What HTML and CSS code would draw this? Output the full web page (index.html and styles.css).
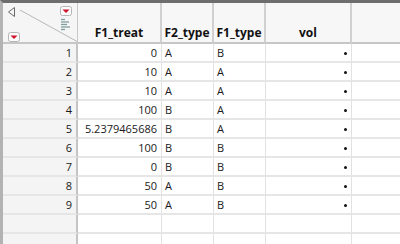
FILE: index.html
```html
<!DOCTYPE html>
<html>
<head>
<meta charset="utf-8">
<link rel="stylesheet" href="styles.css">
</head>
<body>
<div class="frame">
<table class="grid">
<colgroup>
<col class="c0"><col class="c1"><col class="c2"><col class="c3"><col class="c4"><col class="c5">
</colgroup>
<thead>
<tr>
<th class="corner">
<svg class="corner-svg" width="75" height="39" viewBox="0 0 75 39">
<path d="M11.5 4.5 L5.5 9 L11.5 13.5 Z" fill="none" stroke="#6a6a6a" stroke-width="1"/>
<line x1="17" y1="7" x2="75" y2="39" stroke="#b8b8b8" stroke-width="1"/>
<rect x="57.5" y="3.5" width="11" height="9" rx="2" fill="#fbfbfb" stroke="#b5b5b5"/>
<path d="M59.5 6.5 L66.5 6.5 L63 10 Z" fill="#d0112b"/>
<rect x="5.5" y="29.5" width="11" height="9" rx="2" fill="#fbfbfb" stroke="#b5b5b5"/>
<path d="M7.5 32.5 L14.5 32.5 L11 36 Z" fill="#d0112b"/>
<g stroke="#7f9e9c" stroke-width="1.3">
<line x1="58" y1="16.5" x2="62" y2="16.5"/>
<line x1="58" y1="19" x2="66" y2="19"/>
<line x1="58" y1="21.5" x2="64" y2="21.5"/>
<line x1="58" y1="24" x2="67" y2="24"/>
<line x1="58" y1="26.5" x2="62" y2="26.5"/>
</g>
</svg>
</th>
<th class="hd">F1_treat</th>
<th class="hd">F2_type</th>
<th class="hd">F1_type</th>
<th class="hd">vol</th>
<th class="hd last"></th>
</tr>
</thead>
<tbody>
<tr><td class="rn">1</td><td class="num">0</td><td class="chr">A</td><td class="chr">B</td><td class="num"><span class="miss"></span></td><td></td></tr>
<tr><td class="rn">2</td><td class="num">10</td><td class="chr">A</td><td class="chr">A</td><td class="num"><span class="miss"></span></td><td></td></tr>
<tr><td class="rn">3</td><td class="num">10</td><td class="chr">A</td><td class="chr">A</td><td class="num"><span class="miss"></span></td><td></td></tr>
<tr><td class="rn">4</td><td class="num">100</td><td class="chr">B</td><td class="chr">A</td><td class="num"><span class="miss"></span></td><td></td></tr>
<tr><td class="rn">5</td><td class="num">5.2379465686</td><td class="chr">B</td><td class="chr">A</td><td class="num"><span class="miss"></span></td><td></td></tr>
<tr><td class="rn">6</td><td class="num">100</td><td class="chr">B</td><td class="chr">B</td><td class="num"><span class="miss"></span></td><td></td></tr>
<tr><td class="rn">7</td><td class="num">0</td><td class="chr">B</td><td class="chr">B</td><td class="num"><span class="miss"></span></td><td></td></tr>
<tr><td class="rn">8</td><td class="num">50</td><td class="chr">A</td><td class="chr">B</td><td class="num"><span class="miss"></span></td><td></td></tr>
<tr><td class="rn">9</td><td class="num">50</td><td class="chr">A</td><td class="chr">B</td><td class="num"><span class="miss"></span></td><td></td></tr>
<tr><td class="rn"></td><td></td><td></td><td></td><td></td><td></td></tr>
<tr><td class="rn"></td><td></td><td></td><td></td><td></td><td></td></tr>
</tbody>
</table>
</div>
</body>
</html>
```
FILE: styles.css
```css
html, body {
  margin: 0;
  padding: 0;
  background: #ffffff;
  overflow: hidden;
}
.frame {
  width: 400px;
  height: 244px;
  box-sizing: border-box;
  border-top: 3px solid #6e6e6e;
  border-left: 3px solid #b3b3b3;
  overflow: hidden;
  background: #ffffff;
}
.grid {
  border-collapse: separate;
  border-spacing: 0;
  table-layout: fixed;
  width: 500px;
  font-family: "Open Sans", "Noto Sans", sans-serif;
  font-size: 11px;
  color: #1a1a1a;
}
.c0 { width: 75px; }
.c1 { width: 84px; }
.c2 { width: 52px; }
.c3 { width: 52px; }
.c4 { width: 86px; }
.c5 { width: 151px; }
th, td {
  box-sizing: border-box;
  padding: 0;
  white-space: nowrap;
  overflow: hidden;
}
th {
  height: 39px;
  background: #f7f7f7;
  border-right: 2px solid #d0d0d0;
  border-bottom: 2px solid #c6c6c6;
  vertical-align: bottom;
  font-weight: 700;
  font-size: 12px;
  color: #111111;
  padding-bottom: 2px;
  line-height: 14px;
}
th.corner {
  padding: 0;
  vertical-align: top;
  border-right: 1px solid #c8c8c8;
  background: #f5f5f5;
}
.corner-svg {
  display: block;
}
th.last { border-right: none; }
td {
  height: 19px;
  line-height: 17px;
  border-right: 1px solid #e2e2e2;
  border-bottom: 2px solid #e6e6e6;
  background: #ffffff;
}
td.rn {
  background: #f4f4f4;
  border-right: 2px solid #c4c4c4;
  text-align: right;
  padding-right: 4px;
}
td.num {
  text-align: right;
  padding-right: 4px;
}
td.chr {
  text-align: left;
  padding-left: 3px;
}
.miss {
  display: inline-block;
  width: 3px;
  height: 3px;
  border-radius: 50%;
  background: #111111;
  vertical-align: middle;
  margin-bottom: 1px;
}
```
